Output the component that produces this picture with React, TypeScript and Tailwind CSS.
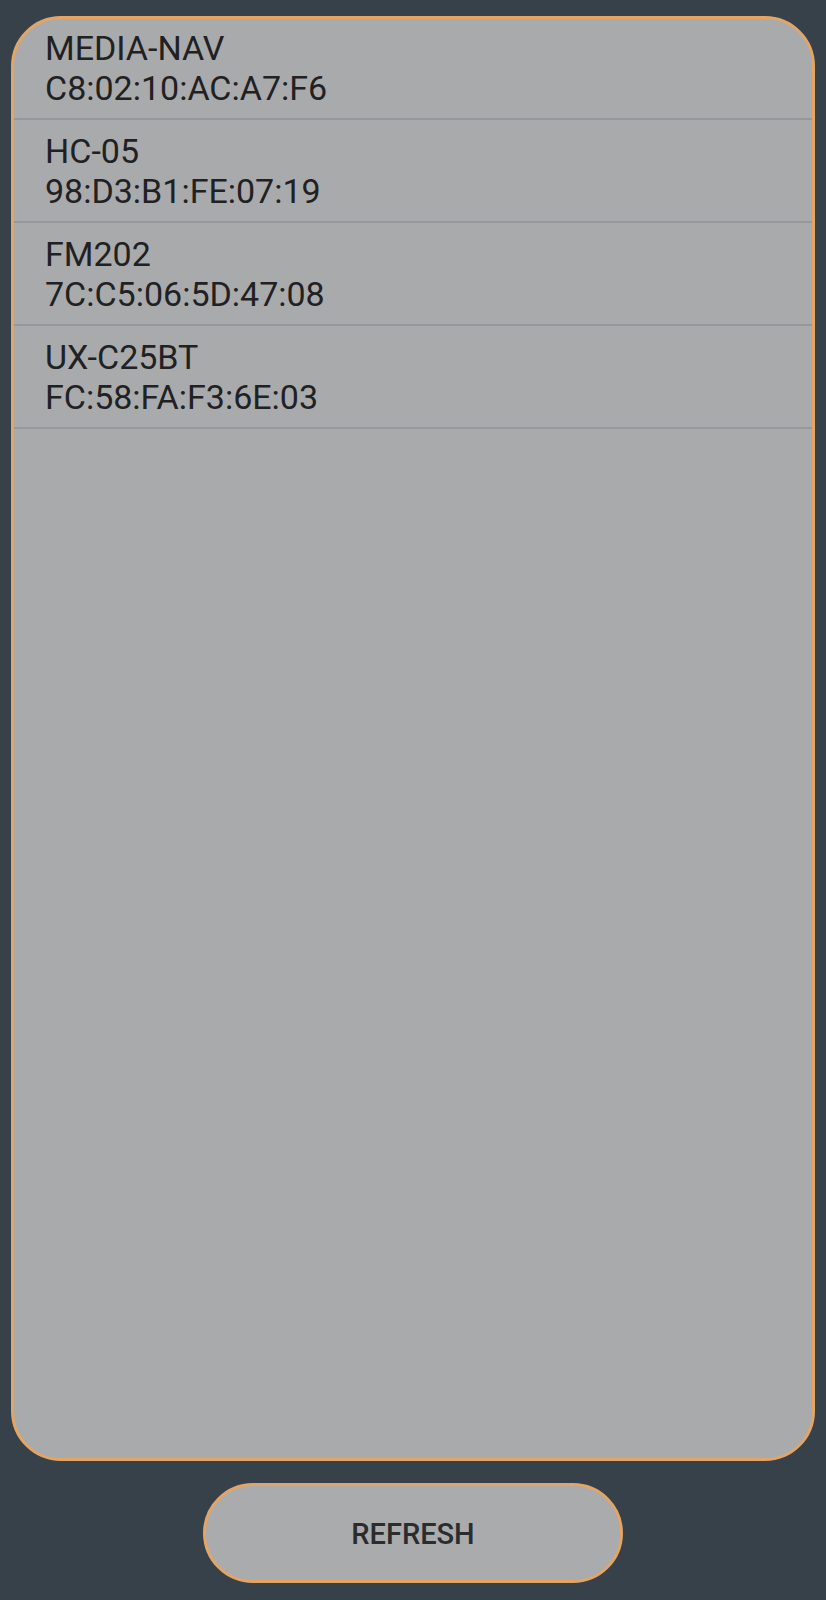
import React from 'react'

const devices = [
  { name: 'MEDIA-NAV', mac: 'C8:02:10:AC:A7:F6' },
  { name: 'HC-05', mac: '98:D3:B1:FE:07:19' },
  { name: 'FM202', mac: '7C:C5:06:5D:47:08' },
  { name: 'UX-C25BT', mac: 'FC:58:FA:F3:6E:03' },
]

function App() {
  return (
    <div className="min-h-[1600px] h-[1600px] bg-[#36414a] flex flex-col items-center pt-4 px-[11px] font-['Roboto',sans-serif]">
      {/* Device list */}
      <div className="w-full h-[1445px] bg-[#a9aaac] border-[3px] border-[#e3a468] rounded-[50px] overflow-hidden">
        <div className="-mt-[2px]">
          {devices.map(d => (
            <div key={d.mac} className="h-[103px] border-b-2 border-[#96979a] pl-[31px] pt-[11px]">
              <div className="text-[34px] leading-[40px] text-[#1f2123]">{d.name}</div>
              <div className="text-[34px] leading-[40px] text-[#1f2123]">{d.mac}</div>
            </div>
          ))}
        </div>
      </div>

      {/* Refresh */}
      <button className="mt-[22px] w-[420px] h-[100px] pt-[4px] bg-[#aaabad] border-[3px] border-[#e3a468] rounded-full text-[29px] font-medium text-[#2a2c2e]">
        REFRESH
      </button>
    </div>
  )
}

export default App
